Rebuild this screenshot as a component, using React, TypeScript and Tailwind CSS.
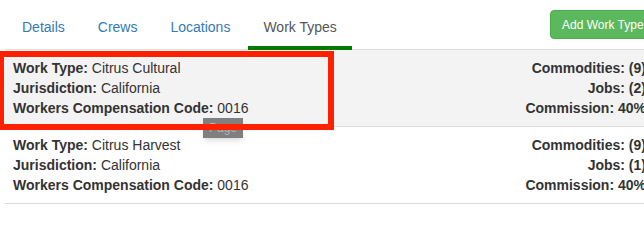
import React from 'react'

interface WorkType {
  name: string
  jurisdiction: string
  compCode: string
  commodities: number
  jobs: number
  commission: string
}

const workTypes: WorkType[] = [
  { name: 'Citrus Cultural', jurisdiction: 'California', compCode: '0016', commodities: 9, jobs: 2, commission: '40%' },
  { name: 'Citrus Harvest', jurisdiction: 'California', compCode: '0016', commodities: 9, jobs: 1, commission: '40%' },
]

const tabs = ['Details', 'Crews', 'Locations', 'Work Types']

function WorkTypeRow({ item, shaded }: { item: WorkType; shaded: boolean }) {
  return (
    <div
      className={`flex justify-between border-b border-[#ddd] px-2 py-2 ${shaded ? 'bg-[#f3f3f3]' : 'bg-white'}`}
    >
      <div>
        <div>
          <span className="font-bold">Work Type:</span> {item.name}
        </div>
        <div>
          <span className="font-bold">Jurisdiction:</span> {item.jurisdiction}
        </div>
        <div>
          <span className="font-bold">Workers Compensation Code:</span> {item.compCode}
        </div>
      </div>
      <div className="text-right font-bold">
        <div>Commodities: ({item.commodities})</div>
        <div>Jobs: ({item.jobs})</div>
        <div>Commission: {item.commission}</div>
      </div>
    </div>
  )
}

export default function App() {
  return (
    <div
      className="relative w-[644px] h-[210px] overflow-hidden bg-white text-[14px] leading-[20px] text-[#333]"
      style={{ fontFamily: '"Liberation Sans", Arial, sans-serif' }}
    >
      <div className="ml-[5px] w-[649px]">
        <div className="flex border-b border-[#ddd]">
          <ul className="flex gap-[3px] pt-[7px] ml-[2px]">
            {tabs.map((tab) => {
              const active = tab === 'Work Types'
              return (
                <li
                  key={tab}
                  className={`-mb-px px-[15px] pt-[10px] pb-[9px] border-b-4 ${
                    active ? 'border-[#007a00] text-[#555]' : 'border-transparent text-[#337ab7]'
                  }`}
                >
                  {tab}
                </li>
              )
            })}
          </ul>
          <button className="ml-auto mt-[10px] self-start h-[29px] w-[104px] pl-[11px] text-left rounded-[4px] border border-[#4cae4c] bg-[#5cb85c] text-white text-[12px] whitespace-nowrap">
            Add Work Type
          </button>
        </div>
        {workTypes.map((item, i) => (
          <WorkTypeRow key={item.name} item={item} shaded={i === 0} />
        ))}
      </div>

      {/* hover tooltip */}
      <div className="absolute left-[203px] top-[118px] w-[40px] h-[20px] bg-[#7f7f7f] text-[#b4b4b4] text-[12px] leading-[20px] text-center shadow-md">
        Page
      </div>

      {/* annotation box */}
      <div className="absolute left-[-2px] top-[51px] w-[336px] h-[79px] border-[6px] border-[#ff2000]" />
    </div>
  )
}
